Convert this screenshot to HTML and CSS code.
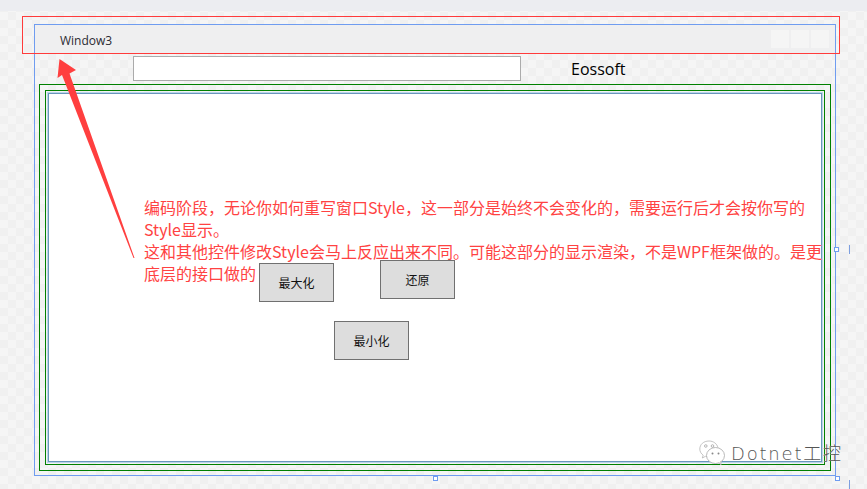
FILE: index.html
```html
<!DOCTYPE html>
<html lang="zh-CN">
<head>
<meta charset="utf-8">
<title>Window3</title>
<link rel="stylesheet" href="styles.css">
</head>
<body>
<div class="top-strip"></div>
<main class="stage">
  <section class="window">
    <header class="titlebar">
      <span class="title">Window3</span>
      <div class="win-buttons"><i></i><i></i><i></i></div>
    </header>
    <div class="toolrow">
      <div class="textbox"></div>
      <span class="brand">Eossoft</span>
    </div>
    <div class="green-outer">
      <div class="green-inner">
        <div class="canvas">
          <div class="btn btn-max">最大化</div>
          <div class="btn btn-restore">还原</div>
          <div class="btn btn-min">最小化</div>
        </div>
      </div>
    </div>
    <span class="handle handle-right"></span>
    <span class="handle handle-bottom"></span>
    <span class="handle handle-corner"></span>
  </section>
  <span class="tick tick-mid"></span>
  <span class="tick tick-low"></span>
  <div class="red-box"></div>
  <svg class="arrow" width="867" height="489" viewBox="0 0 867 489" aria-hidden="true">
    <polygon points="59.5,59 76,70 69.5,73.5 134.5,258 133.5,258 62,75 57.5,78" fill="#ff3f3f"/>
  </svg>
  <p class="note">编码阶段，无论你如何重写窗口Style，这一部分是始终不会变化的，需要运行后才会按你写的<br>Style显示。<br>这和其他控件修改Style会马上反应出来不同。可能这部分的显示渲染，不是WPF框架做的。是更<br>底层的接口做的</p>
  <div class="watermark">
    <svg width="26" height="27" viewBox="0 0 26 27" aria-hidden="true">
      <path d="M10 1C4.5 1 .8 4.500.8 9c0 2.600 1.300 4.700 3.400 6.200L3.300 18l3.200-1.700c1 .3 2 .5 3 .5" fill="#fff" stroke="#b5b5b5" stroke-width=".8"/>
      <path d="M10 1c4.500 0 8 2.800 8.900 6.500" fill="none" stroke="#b5b5b5" stroke-width=".8"/>
      <ellipse cx="16.500" cy="15.500" rx="9" ry="8" fill="#fff" stroke="#a8a8a8" stroke-width=".8"/>
      <path d="M20 22.500l2 2.500-.2-3.800" fill="#fff" stroke="#a8a8a8" stroke-width=".8"/>
      <circle cx="6.800" cy="6" r="1.300" fill="none" stroke="#999" stroke-width=".7"/>
      <circle cx="13.500" cy="6" r="1.300" fill="none" stroke="#999" stroke-width=".7"/>
      <circle cx="13.500" cy="13.500" r="1" fill="#888"/>
      <circle cx="19.500" cy="13.500" r="1" fill="#888"/>
    </svg>
    <span class="wm-text">Dotnet工控</span>
  </div>
</main>
</body>
</html>
```
FILE: styles.css
```css
* { box-sizing: border-box; }
html, body { margin: 0; padding: 0; }
body {
  width: 867px;
  height: 489px;
  overflow: hidden;
  background: #f2f2f2;
  font-family: "Noto Sans CJK SC", "Noto Sans", sans-serif;
}
.top-strip { height: 11px; background: #ecedf1; }
.stage {
  position: relative;
  height: 478px;
  padding: 13px 0 0 34px;
  background-color: #f5f5f5;
  background-image: repeating-conic-gradient(#f0f0f0 0 25%, #f5f5f5 0 50%);
  background-size: 16px 16px;
  background-position: 0 1px;
}
.window {
  position: relative;
  display: flex;
  flex-direction: column;
  width: 802px;
  height: 452px;
  border: 1px solid #6f9cf0;
}
.titlebar {
  display: flex;
  align-items: center;
  justify-content: space-between;
  height: 28px;
  padding: 0 6px 0 25px;
  background: #efeff0;
}
.title {
  padding-top: 2px;
  font-family: "Open Sans", "Noto Sans", sans-serif;
  font-size: 12px;
  color: #2b2b33;
}
.win-buttons { display: flex; gap: 2px; }
.win-buttons i { width: 18px; height: 18px; background: #f5f5f5; }
.toolrow {
  display: flex;
  align-items: flex-start;
  height: 31px;
  padding: 3px 0 0 98px;
}
.textbox {
  width: 388px;
  height: 25px;
  background: #fff;
  border: 1px solid #ababab;
}
.brand {
  margin: 1px 0 0 50px;
  font-family: "Open Sans", "Noto Sans", sans-serif;
  font-size: 16px;
  line-height: 24px;
  color: #000;
}
.green-outer {
  flex: 1;
  margin: 0 4px 4px 4px;
  padding: 5px;
  border: 1px solid #008000;
}
.green-inner {
  height: 100%;
  padding: 2px;
  border: 1px solid #008000;
}
.canvas {
  display: grid;
  justify-items: start;
  align-items: start;
  height: 100%;
  background: #fff;
  border: 1px solid #6a97bb;
  box-shadow: 0 0 0 1px #b9d4ea;
}
.btn {
  grid-area: 1 / 1;
  display: flex;
  align-items: center;
  justify-content: center;
  width: 75px;
  height: 39px;
  background: #dddddd;
  border: 1px solid #707070;
  font-size: 12px;
  color: #111;
}
.btn-max { margin: 169px 0 0 210px; }
.btn-restore { margin: 166px 0 0 331px; }
.btn-min { margin: 227px 0 0 285px; }
.handle {
  position: absolute;
  width: 5px;
  height: 5px;
  background: #fff;
  border: 1px solid #6f9cf0;
}
.handle-right { right: -4px; top: 222px; }
.handle-bottom { left: 398px; bottom: -6px; }
.handle-corner { right: -5px; bottom: -6px; }
.tick { position: absolute; left: 849px; width: 1px; background: #7d9fe0; }
.tick-mid { top: 234px; height: 9px; }
.tick-low { top: 469px; height: 9px; }
.red-box {
  position: absolute;
  left: 22px;
  top: 5px;
  width: 818px;
  height: 38px;
  border: 1px solid #ff3b3b;
}
.arrow { position: absolute; left: 0; top: -11px; pointer-events: none; }
.note {
  position: absolute;
  left: 144px;
  top: 185px;
  margin: 0;
  font-size: 16px;
  line-height: 22px;
  color: #ff4242;
  white-space: nowrap;
}
.watermark {
  position: absolute;
  left: 699px;
  top: 428px;
  display: flex;
  align-items: center;
  gap: 6px;
}
.wm-text {
  margin-bottom: 2px;
  font-family: "DejaVu Sans", "Noto Sans CJK SC", sans-serif;
  font-size: 18px;
  font-weight: 300;
  letter-spacing: 1.800px;
  color: #555;
  text-shadow: 0 0 1px #fff;
}
```
